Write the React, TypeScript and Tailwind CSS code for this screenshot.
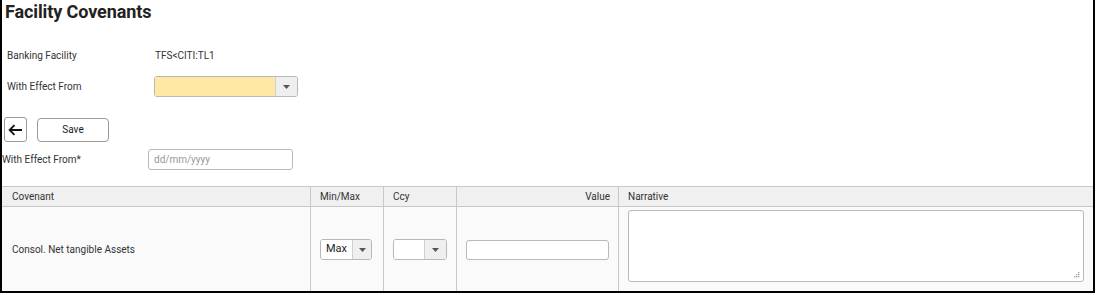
import React from 'react'

function Caret() {
  return (
    <svg width="7" height="4" viewBox="0 0 7 4" className="text-[#555]">
      <path d="M0 0h7L3.5 4z" fill="currentColor" />
    </svg>
  )
}

function Select({ value, width, bg = 'bg-white', btn = 'w-[22px]' }: { value?: string; width: string; bg?: string; btn?: string }) {
  return (
    <div className={`flex h-[21px] ${width} rounded-[3px] border border-[#b8b8b8] overflow-hidden`}>
      <div className={`flex-1 ${bg} px-[5px] flex items-center text-[11px] text-[#222]`}>{value}</div>
      <div className={`${btn} bg-[#efefef] border-l border-[#d0d0d0] flex items-center justify-center`}>
        <Caret />
      </div>
    </div>
  )
}

export default function App() {
  return (
    <div className="w-[1097px] h-[295px] bg-white overflow-hidden" style={{ fontFamily: 'Roboto, "Liberation Sans", sans-serif' }}>
      <div className="w-[1095px] h-[293px] border-l-2 border-r-2 border-b-2 border-black relative overflow-hidden text-[#333]">
        <h1 className="pl-[3px] pt-0 text-[18px] leading-[24px] font-bold text-[#222] tracking-[-0.1px]">Facility Covenants</h1>

        <div className="flex items-center h-[18px] mt-[22px] text-[10px]">
          <span className="w-[153px] pl-[5px]">Banking Facility</span>
          <span>TFS&lt;CITI:TL1</span>
        </div>

        <div className="flex items-center mt-[12px] text-[10px]">
          <span className="w-[152px] pl-[5px]">With Effect From</span>
          <Select width="w-[144px]" bg="bg-[#fde9a4]" />
        </div>

        <div className="flex items-center gap-[10px] mt-[20px] pl-[2px]">
          <button className="w-[23px] h-[25px] rounded-[3px] border border-[#9a9a9a] flex items-center justify-center bg-white">
            <svg width="15" height="12" viewBox="0 0 15 12" fill="none" stroke="#111" strokeWidth="1.8">
              <path d="M14 6H2M6.5 1.2 1.6 6l4.9 4.8" />
            </svg>
          </button>
          <button className="w-[72px] h-[24px] rounded-[4px] border border-[#9a9a9a] bg-white text-[10px] text-[#222]">Save</button>
        </div>

        <div className="flex items-center mt-[7px] text-[10px]">
          <span className="w-[146px]">With Effect From*</span>
          <div className="w-[145px] h-[21px] rounded-[3px] border border-[#b8b8b8] px-[5px] flex items-center text-[10px] text-[#999]">dd/mm/yyyy</div>
        </div>

        <div className="mt-[16px] border-t border-[#c8c8c8] text-[10px]">
          <div className="grid grid-cols-[308px_73px_73px_162px_1fr] h-[20px] bg-[#f0f0f0] border-b border-[#c8c8c8]">
            <div className="flex items-center pl-[10px]">Covenant</div>
            <div className="flex items-center pl-[9px] border-l border-[#c8c8c8]">Min/Max</div>
            <div className="flex items-center pl-[9px] border-l border-[#c8c8c8]">Ccy</div>
            <div className="flex items-center justify-end pr-[8px] border-l border-[#c8c8c8]">Value</div>
            <div className="flex items-center pl-[9px] border-l border-[#c8c8c8]">Narrative</div>
          </div>
          <div className="grid grid-cols-[308px_73px_73px_162px_1fr] h-[86px] bg-[#fafafa] border-b border-[#c8c8c8]">
            <div className="flex items-center pl-[10px] text-[10px]">Consol. Net tangible Assets</div>
            <div className="flex items-center pl-[9px] border-l border-[#c8c8c8]">
              <Select value="Max" width="w-[52px]" />
            </div>
            <div className="flex items-center pl-[9px] border-l border-[#c8c8c8]">
              <Select width="w-[54px]" />
            </div>
            <div className="flex items-center pl-[9px] border-l border-[#c8c8c8]">
              <div className="w-[143px] h-[20px] rounded-[3px] border border-[#b8b8b8] bg-white" />
            </div>
            <div className="pl-[9px] pt-[3px] border-l border-[#c8c8c8]">
              <div className="relative w-[456px] h-[72px] rounded-[3px] border border-[#b8b8b8] bg-white">
                <svg width="6" height="6" viewBox="0 0 6 6" className="absolute right-[3px] bottom-[3px]" fill="#a0a0a0">
                  <rect x="4" y="0" width="1.3" height="1.3" />
                  <rect x="2" y="2" width="1.3" height="1.3" />
                  <rect x="4" y="2" width="1.3" height="1.3" />
                  <rect x="0" y="4" width="1.3" height="1.3" />
                  <rect x="2" y="4" width="1.3" height="1.3" />
                  <rect x="4" y="4" width="1.3" height="1.3" />
                </svg>
              </div>
            </div>
          </div>
        </div>
      </div>
    </div>
  )
}
